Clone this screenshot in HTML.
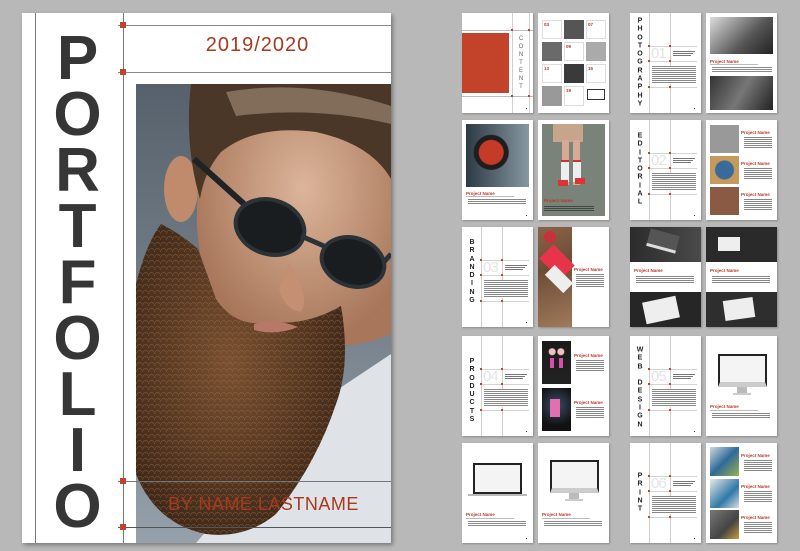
<!DOCTYPE html>
<html><head><meta charset="utf-8">
<style>
*{margin:0;padding:0;box-sizing:border-box}
body{width:800px;height:551px;background:#b8b8b8;position:relative;overflow:hidden;font-family:"Liberation Sans",sans-serif}
.abs{position:absolute}
.pg{position:absolute;width:71px;height:100px;background:#fff;overflow:hidden;box-shadow:1px 1px 2px rgba(0,0,0,.25)}
.pg *{position:absolute}
.vl{width:1px;top:0;bottom:0;background:#d0d0d0}
.hl{height:1px;left:19px;right:4px;background:#d4d4d4}
.rd{width:2px;height:2px;background:#c0432a}
.word{left:4px;width:12px;text-align:center;font-weight:bold;font-size:7px;line-height:8.3px;color:#222;top:50%;transform:translateY(-50%)}
.num{left:21px;top:33px;font-size:15px;color:#e4e4e4;line-height:15px;letter-spacing:-1px}
.bar{height:1px;background:#777}
.lbar{height:1px;background:#bbb}
.pn{font-size:4.5px;font-weight:bold;color:#b63a22;white-space:nowrap;line-height:5px}
.dot{width:1px;height:1px;background:#333;bottom:4px;right:6px}
.cover{left:22px;top:13px;width:369px;height:530px;background:#fff;box-shadow:2px 2px 4px rgba(0,0,0,.35)}
.L{position:absolute;left:28px;width:55px;text-align:center;font-size:62px;font-weight:bold;color:#363636;line-height:56px}
</style></head><body>

<div class="abs cover">
  <div class="abs" style="left:13px;top:0;width:1px;height:530px;background:#777"></div>
  <div class="abs" style="left:101px;top:0;width:1px;height:530px;background:#777"></div>
  <div class="abs" style="left:96px;top:12px;width:273px;height:1px;background:#888"></div>
  <div class="abs" style="left:96px;top:59px;width:273px;height:1px;background:#888"></div>
  <div class="abs" style="left:98px;top:9px;width:6px;height:6px;background:#c0432a"></div>
  <div class="abs" style="left:98px;top:56px;width:6px;height:6px;background:#c0432a"></div>
  <div class="abs" style="left:102px;top:21px;width:267px;text-align:center;font-size:20px;color:#a8391f;letter-spacing:1px">2019/2020</div>
  <div class="L" style="top:18px">P</div>
  <div class="L" style="top:74px">O</div>
  <div class="L" style="top:130px">R</div>
  <div class="L" style="top:186px">T</div>
  <div class="L" style="top:242px">F</div>
  <div class="L" style="top:298px">O</div>
  <div class="L" style="top:354px">L</div>
  <div class="L" style="top:410px">I</div>
  <div class="L" style="top:466px">O</div>
  <svg class="abs" style="left:114px;top:71px" width="255" height="459" viewBox="0 0 255 459">
    <defs>
      <linearGradient id="bg" x1="0" y1="0" x2="0" y2="1"><stop offset="0" stop-color="#56616c"/><stop offset="1" stop-color="#95a0aa"/></linearGradient>
      <radialGradient id="sk" cx=".55" cy=".4" r=".6"><stop offset="0" stop-color="#dcb59a"/><stop offset="1" stop-color="#a8765a"/></radialGradient>
      <radialGradient id="bd" cx=".45" cy=".45" r=".6"><stop offset="0" stop-color="#7a5030"/><stop offset="1" stop-color="#3e2718"/></radialGradient>
      <pattern id="hair" width="6" height="6" patternUnits="userSpaceOnUse"><path d="M0 6 Q3 0 6 4" stroke="#a0764e" stroke-width=".6" fill="none" opacity=".6"/></pattern>
    </defs>
    <rect width="255" height="459" fill="url(#bg)"/>
    <path d="M180 320 L255 270 L255 459 L60 459 Z" fill="#dfe2e6"/>
    <path d="M62 0 L255 0 L255 250 Q210 270 170 255 L90 235 Q55 180 62 110 Z" fill="url(#sk)"/>
    <ellipse cx="45" cy="105" rx="17" ry="33" fill="#c08a6c"/>
    <path d="M55 0 L255 0 L255 95 Q235 60 180 48 Q120 40 85 68 Q68 88 64 115 Q48 60 55 0 Z" fill="#4a3728"/>
    <path d="M90 8 Q170 -6 255 22 L255 40 Q180 22 100 32 Z" fill="#9a8470" opacity=".7"/>
    <path d="M25 140 Q45 150 62 165 L80 215 Q100 245 135 238 Q170 242 205 222 Q215 280 200 320 Q180 380 140 430 Q110 455 70 450 Q20 440 0 390 L0 200 Q10 160 25 140 Z" fill="url(#bd)"/>
    <path d="M25 140 Q45 150 62 165 L80 215 Q100 245 135 238 Q170 242 205 222 Q215 280 200 320 Q180 380 140 430 Q110 455 70 450 Q20 440 0 390 L0 200 Q10 160 25 140 Z" fill="url(#hair)"/>
    <path d="M118 240 Q140 234 162 243 Q140 252 118 246 Z" fill="#b87868"/>
    <path d="M152 178 Q175 210 165 228 Q148 225 143 205 Z" fill="#c48f72"/>
    <line x1="58" y1="75" x2="108" y2="120" stroke="#1f2326" stroke-width="6"/>
    <ellipse cx="134" cy="143" rx="35" ry="27" fill="#1a1d20" stroke="#2b3238" stroke-width="4" transform="rotate(18 134 143)"/>
    <ellipse cx="217" cy="178" rx="32" ry="24" fill="#1a1d20" stroke="#2b3238" stroke-width="4" transform="rotate(18 217 178)"/>
    <path d="M165 152 L188 162" stroke="#2b3238" stroke-width="5"/>
    <path d="M248 178 L255 170" stroke="#2b3238" stroke-width="5"/>
  </svg>
  <div class="abs" style="left:96px;top:468px;width:273px;height:1px;background:#777"></div>
  <div class="abs" style="left:96px;top:514px;width:273px;height:1px;background:#555"></div>
  <div class="abs" style="left:98px;top:465px;width:6px;height:6px;background:#c0432a"></div>
  <div class="abs" style="left:98px;top:511px;width:6px;height:6px;background:#c0432a"></div>
  <div class="abs" style="left:114px;top:481px;width:255px;text-align:center;font-size:18px;color:#a8391f;letter-spacing:.5px">BY NAME LASTNAME</div>
</div>

<!-- Row 1 -->
<div class="pg" style="left:462px;top:13px">
  <div style="left:0;top:20px;width:47px;height:60px;background:#c2432a"></div>
  <div class="vl" style="left:50px"></div><div class="vl" style="left:67px"></div>
  <div class="lbar" style="left:0;right:0;top:17px"></div><div class="lbar" style="left:0;right:0;top:83px"></div>
  <div class="rd" style="left:49px;top:16px"></div><div class="rd" style="left:66px;top:16px"></div>
  <div class="rd" style="left:49px;top:82px"></div><div class="rd" style="left:66px;top:82px"></div>
  <div style="left:54px;top:22px;width:10px;text-align:center;font-size:6px;line-height:8px;color:#666">C<br>O<br>N<br>T<br>E<br>N<br>T</div>
  <div class="dot"></div>
</div>
<div class="pg" style="left:538px;top:13px">
  <div style="left:4px;top:7px;width:20px;height:19px;border:1px solid #ddd"><div class="pn" style="left:1px;top:1px">03</div></div>
  <div style="left:26px;top:7px;width:20px;height:19px;background:#555"></div>
  <div style="left:48px;top:7px;width:20px;height:19px;border:1px solid #ddd"><div class="pn" style="left:1px;top:1px">07</div></div>
  <div style="left:4px;top:29px;width:20px;height:19px;background:#6a6a6a"></div>
  <div style="left:26px;top:29px;width:20px;height:19px;border:1px solid #ddd"><div class="pn" style="left:1px;top:1px">09</div></div>
  <div style="left:48px;top:29px;width:20px;height:19px;background:#aaa"></div>
  <div style="left:4px;top:51px;width:20px;height:19px;border:1px solid #ddd"><div class="pn" style="left:1px;top:1px">13</div></div>
  <div style="left:26px;top:51px;width:20px;height:19px;background:#3a3a3a"></div>
  <div style="left:48px;top:51px;width:20px;height:19px;border:1px solid #ddd"><div class="pn" style="left:1px;top:1px">15</div></div>
  <div style="left:4px;top:73px;width:20px;height:20px;background:#999"></div>
  <div style="left:26px;top:73px;width:20px;height:20px;border:1px solid #ddd"><div class="pn" style="left:1px;top:1px">19</div></div>
  <div style="left:49px;top:76px;width:18px;height:11px;border:1.5px solid #333"></div>
</div>
<div class="pg" style="left:630px;top:13px">
  <div class="vl" style="left:19px"></div><div class="vl" style="left:40px"></div>
  <div class="hl" style="top:33px"></div><div class="hl" style="top:48px"></div><div class="hl" style="top:74px"></div>
  <div class="rd" style="left:18px;top:32px"></div><div class="rd" style="left:39px;top:32px"></div><div class="rd" style="left:18px;top:47px"></div><div class="rd" style="left:39px;top:47px"></div><div class="rd" style="left:18px;top:73px"></div><div class="rd" style="left:39px;top:73px"></div>
  <div class="num">01</div>
  <div class="bar" style="left:43px;top:38px;width:22px"></div><div class="bar" style="left:43px;top:40px;width:20px"></div><div class="bar" style="left:43px;top:42px;width:18px"></div>
  <div style="left:22px;top:53px;width:44px;height:18px;background:repeating-linear-gradient(#888 0 1px,#fff 1px 2px)"></div>
  <div class="word">P<br>H<br>O<br>T<br>O<br>G<br>R<br>A<br>P<br>H<br>Y</div>
  <div class="dot"></div>
</div>
<div class="pg" style="left:706px;top:13px">
  <div style="left:4px;top:4px;width:63px;height:37px;background:linear-gradient(135deg,#ddd,#555 60%,#222)"></div>
  <div class="pn" style="left:4px;top:46px">Project Name</div>
  <div class="lbar" style="left:4px;top:51px;width:48px"></div>
  <div style="left:6px;top:54px;width:60px;height:6px;background:repeating-linear-gradient(#888 0 1px,#fff 1px 2px)"></div>
  <div style="left:4px;top:63px;width:63px;height:34px;background:linear-gradient(120deg,#333,#777 50%,#222)"></div>
</div>

<!-- Row 2 -->
<div class="pg" style="left:462px;top:120px">
  <div style="left:4px;top:4px;width:63px;height:63px;background:radial-gradient(circle at 40% 45%,#c63a28 0 12px,#1e1e1e 13px 17px,transparent 18px),linear-gradient(90deg,#2c3a44,#8797a1)"></div>
  <div class="pn" style="left:4px;top:71px">Project Name</div>
  <div class="lbar" style="left:4px;top:76px;width:48px"></div>
  <div style="left:6px;top:79px;width:58px;height:6px;background:repeating-linear-gradient(#888 0 1px,#fff 1px 2px)"></div>
  <div class="dot"></div>
</div>
<div class="pg" style="left:538px;top:120px">
  <div style="left:4px;top:4px;width:63px;height:92px;background:#7a8379"></div>
  <div style="left:15px;top:4px;width:30px;height:18px;background:#c7a58c"></div>
  <div style="left:24px;top:20px;width:7px;height:45px;background:#d8a994"></div>
  <div style="left:35px;top:20px;width:7px;height:45px;background:#d8a994"></div>
  <div style="left:23px;top:40px;width:8px;height:22px;background:#eee;border-top:2px solid #c33"></div>
  <div style="left:35px;top:40px;width:8px;height:22px;background:#eee;border-top:2px solid #c33"></div>
  <div style="left:20px;top:60px;width:10px;height:6px;background:#d33"></div>
  <div style="left:37px;top:58px;width:10px;height:6px;background:#d33"></div>
  <div class="pn" style="left:6px;top:78px">Project Name</div>
  <div style="left:6px;top:86px;width:50px;height:6px;background:repeating-linear-gradient(#444 0 1px,transparent 1px 2px)"></div>
</div>
<div class="pg" style="left:630px;top:120px">
  <div class="vl" style="left:19px"></div><div class="vl" style="left:40px"></div>
  <div class="hl" style="top:33px"></div><div class="hl" style="top:48px"></div><div class="hl" style="top:74px"></div>
  <div class="rd" style="left:18px;top:32px"></div><div class="rd" style="left:39px;top:32px"></div><div class="rd" style="left:18px;top:47px"></div><div class="rd" style="left:39px;top:47px"></div><div class="rd" style="left:18px;top:73px"></div><div class="rd" style="left:39px;top:73px"></div>
  <div class="num">02</div>
  <div class="bar" style="left:43px;top:38px;width:22px"></div><div class="bar" style="left:43px;top:40px;width:20px"></div><div class="bar" style="left:43px;top:42px;width:18px"></div>
  <div style="left:22px;top:53px;width:44px;height:18px;background:repeating-linear-gradient(#888 0 1px,#fff 1px 2px)"></div>
  <div class="word">E<br>D<br>I<br>T<br>O<br>R<br>I<br>A<br>L</div>
  <div class="dot"></div>
</div>
<div class="pg" style="left:706px;top:120px">
  <div style="left:4px;top:5px;width:29px;height:28px;background:#999"></div>
  <div style="left:4px;top:36px;width:29px;height:28px;background:radial-gradient(circle,#3a6a9a 0 9px,#c69a5a 10px)"></div>
  <div style="left:4px;top:67px;width:29px;height:28px;background:#8a5a44"></div>
  <div class="pn" style="left:35px;top:10px">Project Name</div><div style="left:38px;top:17px;width:28px;height:12px;background:repeating-linear-gradient(#888 0 1px,#fff 1px 2px)"></div>
  <div class="pn" style="left:35px;top:41px">Project Name</div><div style="left:38px;top:48px;width:28px;height:12px;background:repeating-linear-gradient(#888 0 1px,#fff 1px 2px)"></div>
  <div class="pn" style="left:35px;top:72px">Project Name</div><div style="left:38px;top:79px;width:28px;height:12px;background:repeating-linear-gradient(#888 0 1px,#fff 1px 2px)"></div>
</div>

<!-- Row 3 -->
<div class="pg" style="left:462px;top:227px">
  <div class="vl" style="left:19px"></div><div class="vl" style="left:40px"></div>
  <div class="hl" style="top:33px"></div><div class="hl" style="top:48px"></div><div class="hl" style="top:74px"></div>
  <div class="rd" style="left:18px;top:32px"></div><div class="rd" style="left:39px;top:32px"></div><div class="rd" style="left:18px;top:47px"></div><div class="rd" style="left:39px;top:47px"></div><div class="rd" style="left:18px;top:73px"></div><div class="rd" style="left:39px;top:73px"></div>
  <div class="num">03</div>
  <div class="bar" style="left:43px;top:38px;width:22px"></div><div class="bar" style="left:43px;top:40px;width:20px"></div><div class="bar" style="left:43px;top:42px;width:18px"></div>
  <div style="left:22px;top:53px;width:44px;height:18px;background:repeating-linear-gradient(#888 0 1px,#fff 1px 2px)"></div>
  <div class="word" style="top:45%">B<br>R<br>A<br>N<br>D<br>I<br>N<br>G</div>
  <div class="dot"></div>
</div>
<div class="pg" style="left:538px;top:227px">
  <div style="left:0;top:0;width:34px;height:100px;background:linear-gradient(160deg,#8a6448,#6d4c36 40%,#a07a5a)"></div>
  <div style="left:4px;top:25px;width:30px;height:20px;background:#e8344a;transform:rotate(45deg)"></div>
  <div style="left:8px;top:45px;width:26px;height:14px;background:#eee;transform:rotate(45deg)"></div>
  <div style="left:6px;top:4px;width:12px;height:12px;border-radius:50%;background:#c9303a"></div>
  <div class="pn" style="left:36px;top:40px">Project Name</div>
  <div style="left:38px;top:47px;width:28px;height:14px;background:repeating-linear-gradient(#888 0 1px,#fff 1px 2px)"></div>
</div>
<div class="pg" style="left:630px;top:227px">
  <div style="left:0;top:0;width:71px;height:35px;background:linear-gradient(90deg,#2b2b2b,#4a4a4a)"></div>
  <div style="left:18px;top:5px;width:30px;height:18px;background:#555;border-bottom:3px solid #ddd;transform:rotate(15deg)"></div>
  <div class="pn" style="left:4px;top:41px">Project Name</div>
  <div style="left:6px;top:49px;width:58px;height:8px;background:repeating-linear-gradient(#888 0 1px,#fff 1px 2px)"></div>
  <div style="left:0;top:65px;width:71px;height:35px;background:#262626"></div>
  <div style="left:14px;top:72px;width:34px;height:22px;background:#eee;transform:rotate(-12deg)"></div>
</div>
<div class="pg" style="left:706px;top:227px">
  <div style="left:0;top:0;width:71px;height:35px;background:#2a2a2a"></div>
  <div style="left:12px;top:10px;width:22px;height:14px;background:#eee"></div>
  <div class="pn" style="left:4px;top:41px">Project Name</div>
  <div style="left:6px;top:49px;width:58px;height:8px;background:repeating-linear-gradient(#888 0 1px,#fff 1px 2px)"></div>
  <div style="left:0;top:65px;width:71px;height:35px;background:#2e2e2e"></div>
  <div style="left:18px;top:72px;width:30px;height:20px;background:#eee;transform:rotate(-8deg)"></div>
</div>

<!-- Row 4 -->
<div class="pg" style="left:462px;top:336px">
  <div class="vl" style="left:19px"></div><div class="vl" style="left:40px"></div>
  <div class="hl" style="top:33px"></div><div class="hl" style="top:48px"></div><div class="hl" style="top:74px"></div>
  <div class="rd" style="left:18px;top:32px"></div><div class="rd" style="left:39px;top:32px"></div><div class="rd" style="left:18px;top:47px"></div><div class="rd" style="left:39px;top:47px"></div><div class="rd" style="left:18px;top:73px"></div><div class="rd" style="left:39px;top:73px"></div>
  <div class="num">04</div>
  <div class="bar" style="left:43px;top:38px;width:22px"></div><div class="bar" style="left:43px;top:40px;width:20px"></div><div class="bar" style="left:43px;top:42px;width:18px"></div>
  <div style="left:22px;top:53px;width:44px;height:18px;background:repeating-linear-gradient(#888 0 1px,#fff 1px 2px)"></div>
  <div class="word" style="top:55%">P<br>R<br>O<br>D<br>U<br>C<br>T<br>S</div>
  <div class="dot"></div>
</div>
<div class="pg" style="left:538px;top:336px">
  <div style="left:4px;top:5px;width:29px;height:43px;background:radial-gradient(circle at 35% 25%,#f0c0c0 0 3px,transparent 4px),radial-gradient(circle at 65% 25%,#f0c0c0 0 3px,transparent 4px),linear-gradient(#1a1a1a,#222)"></div>
  <div style="left:12px;top:22px;width:4px;height:10px;background:#d84ea8"></div><div style="left:21px;top:22px;width:4px;height:10px;background:#d84ea8"></div>
  <div style="left:4px;top:52px;width:29px;height:43px;background:radial-gradient(circle at 50% 40%,#3a4d6a,#111 70%)"></div>
  <div style="left:12px;top:63px;width:10px;height:18px;background:#e070b0"></div>
  <div class="pn" style="left:36px;top:17px">Project Name</div><div style="left:38px;top:24px;width:28px;height:12px;background:repeating-linear-gradient(#888 0 1px,#fff 1px 2px)"></div>
  <div class="pn" style="left:36px;top:64px">Project Name</div><div style="left:38px;top:71px;width:28px;height:12px;background:repeating-linear-gradient(#888 0 1px,#fff 1px 2px)"></div>
</div>
<div class="pg" style="left:630px;top:336px">
  <div class="vl" style="left:19px"></div><div class="vl" style="left:40px"></div>
  <div class="hl" style="top:33px"></div><div class="hl" style="top:48px"></div><div class="hl" style="top:74px"></div>
  <div class="rd" style="left:18px;top:32px"></div><div class="rd" style="left:39px;top:32px"></div><div class="rd" style="left:18px;top:47px"></div><div class="rd" style="left:39px;top:47px"></div><div class="rd" style="left:18px;top:73px"></div><div class="rd" style="left:39px;top:73px"></div>
  <div class="num">05</div>
  <div class="bar" style="left:43px;top:38px;width:22px"></div><div class="bar" style="left:43px;top:40px;width:20px"></div><div class="bar" style="left:43px;top:42px;width:18px"></div>
  <div style="left:22px;top:53px;width:44px;height:18px;background:repeating-linear-gradient(#888 0 1px,#fff 1px 2px)"></div>
  <div class="word" style="top:52%">W<br>E<br>B<br>&nbsp;<br>D<br>E<br>S<br>I<br>G<br>N</div>
  <div class="dot"></div>
</div>
<div class="pg" style="left:706px;top:336px">
  <div style="left:12px;top:18px;width:49px;height:33px;background:#f4f4f4;border:2px solid #222;border-bottom:5px solid #ccc"></div>
  <div style="left:31px;top:51px;width:10px;height:6px;background:#bbb"></div>
  <div style="left:27px;top:57px;width:18px;height:2px;background:#ccc"></div>
  <div class="pn" style="left:4px;top:68px">Project Name</div>
  <div class="lbar" style="left:4px;top:74px;width:48px"></div>
  <div style="left:6px;top:77px;width:58px;height:6px;background:repeating-linear-gradient(#888 0 1px,#fff 1px 2px)"></div>
</div>

<!-- Row 5 -->
<div class="pg" style="left:462px;top:443px">
  <div style="left:11px;top:20px;width:49px;height:31px;background:#f4f4f4;border:2px solid #222"></div>
  <div style="left:6px;top:51px;width:59px;height:2px;background:#bbb"></div>
  <div class="pn" style="left:4px;top:69px">Project Name</div>
  <div class="lbar" style="left:4px;top:75px;width:48px"></div>
  <div style="left:6px;top:78px;width:58px;height:6px;background:repeating-linear-gradient(#888 0 1px,#fff 1px 2px)"></div>
  <div class="dot"></div>
</div>
<div class="pg" style="left:538px;top:443px">
  <div style="left:12px;top:17px;width:49px;height:33px;background:#f4f4f4;border:2px solid #222;border-bottom:5px solid #ccc"></div>
  <div style="left:31px;top:50px;width:10px;height:6px;background:#bbb"></div>
  <div style="left:27px;top:56px;width:18px;height:2px;background:#ccc"></div>
  <div class="pn" style="left:4px;top:69px">Project Name</div>
  <div class="lbar" style="left:4px;top:75px;width:48px"></div>
  <div style="left:6px;top:78px;width:58px;height:6px;background:repeating-linear-gradient(#888 0 1px,#fff 1px 2px)"></div>
</div>
<div class="pg" style="left:630px;top:443px">
  <div class="vl" style="left:19px"></div><div class="vl" style="left:40px"></div>
  <div class="hl" style="top:33px"></div><div class="hl" style="top:48px"></div><div class="hl" style="top:74px"></div>
  <div class="rd" style="left:18px;top:32px"></div><div class="rd" style="left:39px;top:32px"></div><div class="rd" style="left:18px;top:47px"></div><div class="rd" style="left:39px;top:47px"></div><div class="rd" style="left:18px;top:73px"></div><div class="rd" style="left:39px;top:73px"></div>
  <div class="num">06</div>
  <div class="bar" style="left:43px;top:38px;width:22px"></div><div class="bar" style="left:43px;top:40px;width:20px"></div><div class="bar" style="left:43px;top:42px;width:18px"></div>
  <div style="left:22px;top:53px;width:44px;height:18px;background:repeating-linear-gradient(#888 0 1px,#fff 1px 2px)"></div>
  <div class="word">P<br>R<br>I<br>N<br>T</div>
  <div class="dot"></div>
</div>
<div class="pg" style="left:706px;top:443px">
  <div style="left:4px;top:4px;width:29px;height:29px;background:linear-gradient(135deg,#cfd8dc,#2f6a9a 50%,#9ab34a)"></div>
  <div style="left:4px;top:36px;width:29px;height:29px;background:linear-gradient(135deg,#e8e8e8,#2f78a8 60%,#ddd)"></div>
  <div style="left:4px;top:67px;width:29px;height:29px;background:linear-gradient(135deg,#777,#444 60%,#c9a040)"></div>
  <div class="pn" style="left:35px;top:10px">Project Name</div><div style="left:38px;top:17px;width:28px;height:12px;background:repeating-linear-gradient(#888 0 1px,#fff 1px 2px)"></div>
  <div class="pn" style="left:35px;top:41px">Project Name</div><div style="left:38px;top:48px;width:28px;height:12px;background:repeating-linear-gradient(#888 0 1px,#fff 1px 2px)"></div>
  <div class="pn" style="left:35px;top:72px">Project Name</div><div style="left:38px;top:79px;width:28px;height:12px;background:repeating-linear-gradient(#888 0 1px,#fff 1px 2px)"></div>
</div>

</body></html>
